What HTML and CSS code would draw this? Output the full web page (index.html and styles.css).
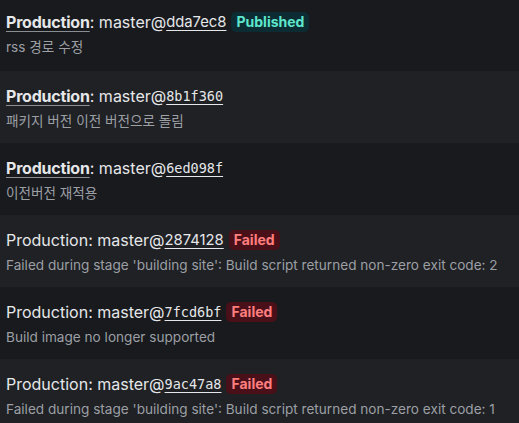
FILE: index.html
```html
<!DOCTYPE html>
<html>
<head>
<meta charset="utf-8">
<link rel="stylesheet" href="styles.css">
</head>
<body>
<ul class="list">
  <li class="row">
    <div class="title"><a class="env strong">Production</a>: master@<a class="hash sans">dda7ec8</a><span class="badge ok">Published</span></div>
    <div class="sub">rss 경로 수정</div>
  </li>
  <li class="row">
    <div class="title"><a class="env strong">Production</a>: master@<a class="hash">8b1f360</a></div>
    <div class="sub">패키지 버전 이전 버전으로 돌림</div>
  </li>
  <li class="row">
    <div class="title"><a class="env strong">Production</a>: master@<a class="hash">6ed098f</a></div>
    <div class="sub">이전버전 재적용</div>
  </li>
  <li class="row">
    <div class="title"><span class="env">Production</span>: master@<a class="hash sans">2874128</a><span class="badge fail">Failed</span></div>
    <div class="sub">Failed during stage 'building site': Build script returned non-zero exit code: 2</div>
  </li>
  <li class="row">
    <div class="title"><span class="env">Production</span>: master@<a class="hash">7fcd6bf</a><span class="badge fail">Failed</span></div>
    <div class="sub">Build image no longer supported</div>
  </li>
  <li class="row">
    <div class="title"><span class="env">Production</span>: master@<a class="hash">9ac47a8</a><span class="badge fail">Failed</span></div>
    <div class="sub">Failed during stage 'building site': Build script returned non-zero exit code: 1</div>
  </li>
</ul>
</body>
</html>
```
FILE: styles.css
```css
html, body {
  margin: 0;
  padding: 0;
  background: #181a1e;
}
body {
  font-family: Inter, "Noto Sans CJK KR", sans-serif;
  color: #e6e7e9;
}
.list {
  list-style: none;
  margin: 0;
  padding: 0;
}
.row {
  display: flex;
  flex-direction: column;
  gap: 3px;
  padding: 13px 6px 12px;
  background: #181a1e;
}
.row:nth-child(even) {
  background: #1f2125;
}
.row:first-child {
  padding-top: 10px;
  padding-bottom: 14px;
}
.title {
  display: flex;
  align-items: center;
  font-size: 16px;
  line-height: 24px;
  white-space: pre;
}
.env.strong {
  font-weight: 700;
  letter-spacing: -0.2px;
  text-decoration: underline;
  text-decoration-color: #8a8d92;
  text-underline-offset: 3px;
}
.hash {
  font-family: "DejaVu Sans Mono", monospace;
  font-size: 13.5px;
  text-decoration: underline;
  text-underline-offset: 3px;
}
.hash.sans {
  font-family: Inter, sans-serif;
  font-size: 14.8px;
}
.badge {
  margin-left: 5px;
  height: 20px;
  line-height: 20px;
  padding: 0 5px;
  border-radius: 5px;
  font-size: 14px;
  font-weight: 700;
}
.badge.ok {
  background: #0c2b32;
  color: #5ee6cc;
}
.badge.fail {
  background: #4a1019;
  color: #ff7f7f;
}
.sub {
  font-family: Inter, "Noto Sans CJK KR", sans-serif;
  font-size: 13.6px;
  line-height: 20px;
  color: #9c9fa4;
}
```
